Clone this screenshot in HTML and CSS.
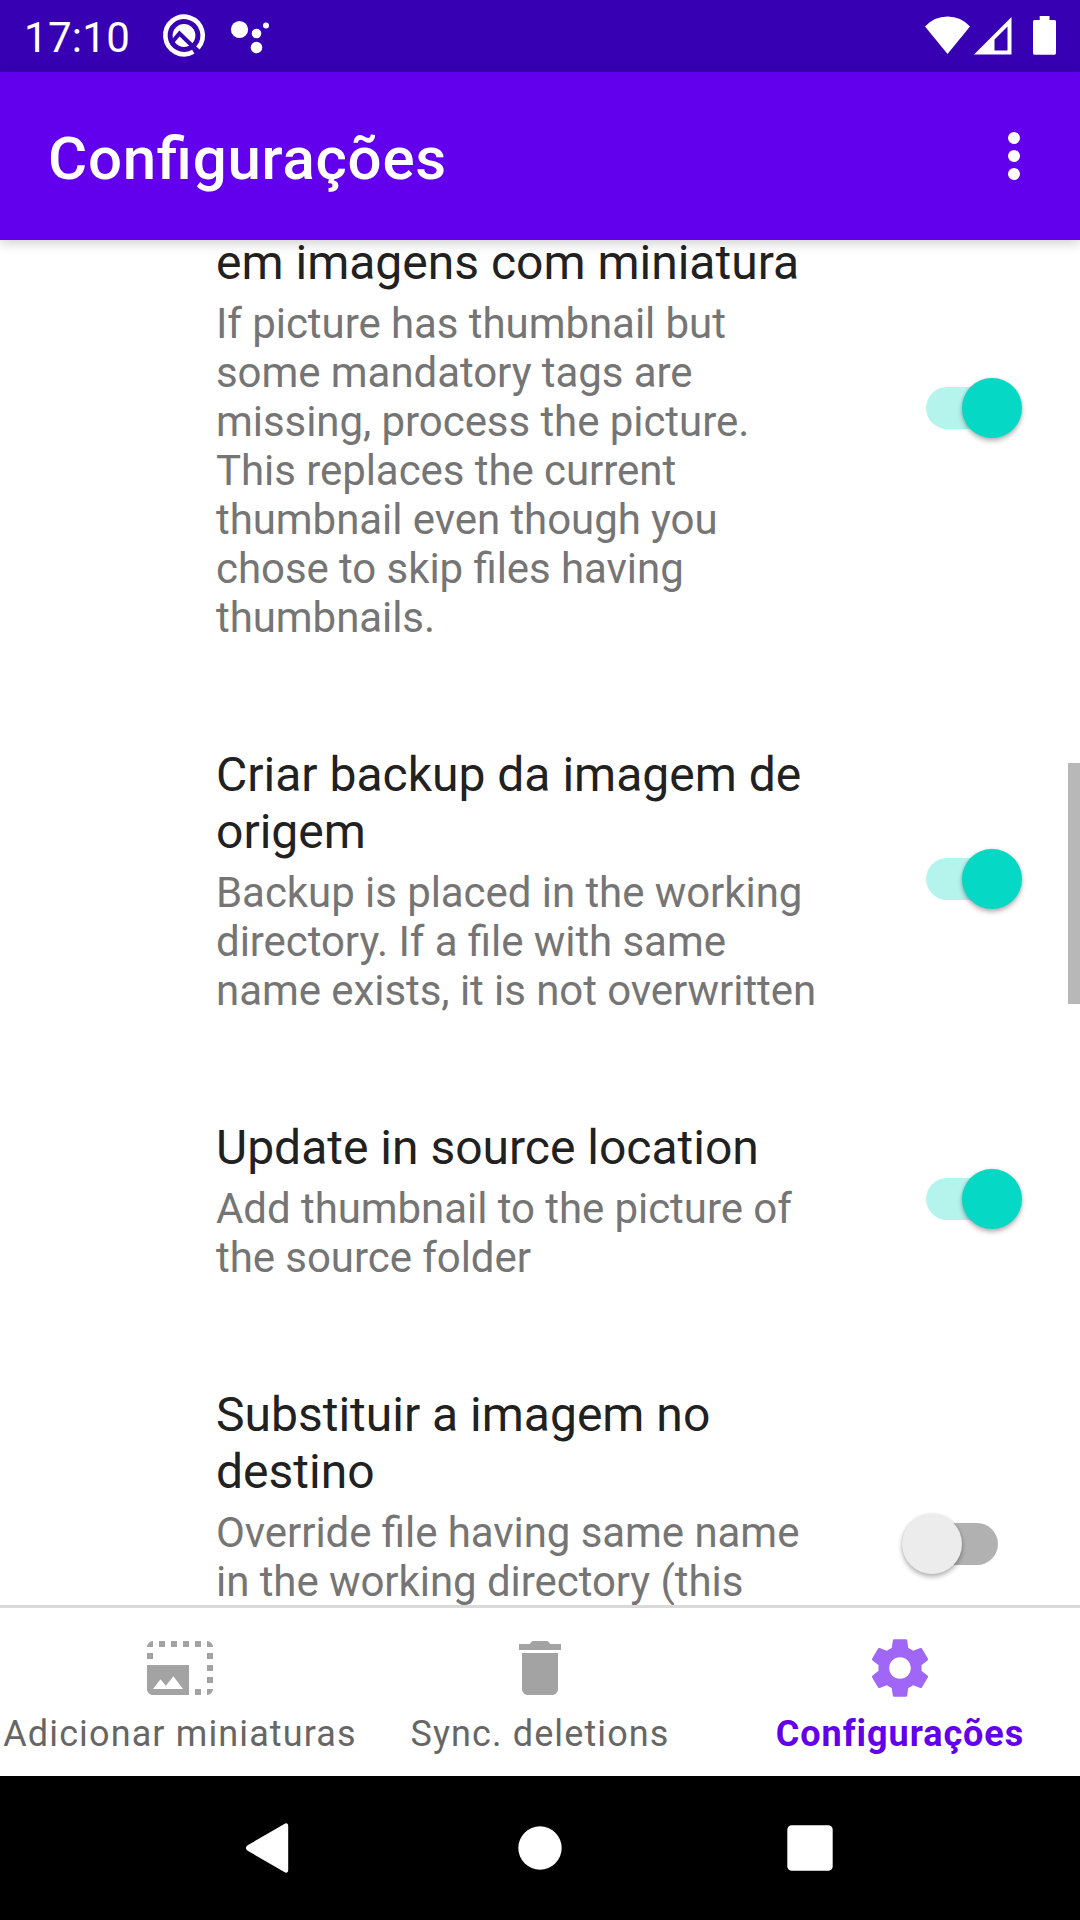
FILE: index.html
```html
<!DOCTYPE html>
<html lang="pt">
<head>
<meta charset="utf-8">
<title>Configurações</title>
<link rel="stylesheet" href="styles.css">
</head>
<body>
<div class="screen">
  <header class="status-bar">
    <span class="clock">17:10</span>
    <svg class="notifications" width="130" height="72" viewBox="150 0 130 72" fill="#fff">
      <path d="M197.900 48A18.700 18.700 0 1 0 193.300 51.700" fill="none" stroke="#fff" stroke-width="4.600"/>
      <circle cx="184" cy="35.500" r="11.400"/>
      <path d="M171 43.500L179.500 33.500L196.500 50" fill="none" stroke="#3700b3" stroke-width="4"/>
      <circle cx="239.500" cy="29.500" r="8.600"/>
      <circle cx="256.500" cy="33.500" r="4.800"/>
      <circle cx="266" cy="25.500" r="3"/>
      <circle cx="256.500" cy="47.500" r="5.800"/>
    </svg>
    <svg class="system-icons" width="160" height="72" viewBox="920 0 160 72" fill="#fff">
      <path d="M947.500 54L925 26.500Q934 16.500 947.500 16.500T970 26.500Z"/>
      <path fill-rule="evenodd" d="M974 54.500L1011.500 17V54.500ZM994.500 50.500H1007.500V26.500L994.500 39.500Z"/>
      <path d="M1039.700 16H1049.500V20H1054.500Q1056 20 1056 21.500V53Q1056 54.700 1054.500 54.700H1034.500Q1033 54.700 1033 53V21.500Q1033 20 1034.500 20H1039.700Z"/>
    </svg>
  </header>

  <div class="app-bar">
    <h1 class="app-title">Configurações</h1>
    <svg class="overflow" width="72" height="72" viewBox="0 0 24 24" fill="#fff">
      <circle cx="12" cy="6" r="2"/><circle cx="12" cy="12" r="2"/><circle cx="12" cy="18" r="2"/>
    </svg>
  </div>

  <main class="list">
    <section class="item item-scrolled">
      <div class="texts">
        <h2 class="title">em imagens com miniatura</h2>
        <p class="summary">If picture has thumbnail but<br>some mandatory tags are<br>missing, process the picture.<br>This replaces the current<br>thumbnail even though you<br>chose to skip files having<br>thumbnails.</p>
      </div>
      <div class="switch on"><span class="thumb"></span></div>
    </section>
    <section class="item">
      <div class="texts">
        <h2 class="title">Criar backup da imagem de<br>origem</h2>
        <p class="summary">Backup is placed in the working<br>directory. If a file with same<br>name exists, it is not overwritten</p>
      </div>
      <div class="switch on"><span class="thumb"></span></div>
    </section>
    <section class="item">
      <div class="texts">
        <h2 class="title">Update in source location</h2>
        <p class="summary">Add thumbnail to the picture of<br>the source folder</p>
      </div>
      <div class="switch on"><span class="thumb"></span></div>
    </section>
    <section class="item item-cut">
      <div class="texts">
        <h2 class="title">Substituir a imagem no<br>destino</h2>
        <p class="summary">Override file having same name<br>in the working directory (this</p>
      </div>
      <div class="switch"><span class="thumb"></span></div>
    </section>
    <div class="scrollbar"></div>
  </main>

  <nav class="tabs">
    <div class="tab">
      <svg class="tab-icon" viewBox="0 0 24 24"><path d="M21 15h2v2h-2v-2zm0-4h2v2h-2v-2zm2 8h-2v2c1 0 2-1 2-2zM13 3h2v2h-2V3zm8 4h2v2h-2V7zm0-4v2h2c0-1-1-2-2-2zM1 7h2v2H1V7zm16-4h2v2h-2V3zm0 16h2v2h-2v-2zM3 3C2 3 1 4 1 5h2V3zm6 0h2v2H9V3zM5 3h2v2H5V3zm-4 8v8c0 1.100.9 2 2 2h12V11H1zm2 8l2.500-3.210 1.790 2.150 2.500-3.220L13 19H3z"/></svg>
      <span class="tab-label">Adicionar miniaturas</span>
    </div>
    <div class="tab">
      <svg class="tab-icon" viewBox="0 0 24 24"><path d="M6 19c0 1.100.9 2 2 2h8c1.100 0 2-.9 2-2V7H6v12zM19 4h-3.500l-1-1h-5l-1 1H5v2h14V4z"/></svg>
      <span class="tab-label">Sync. deletions</span>
    </div>
    <div class="tab active">
      <svg class="tab-icon" viewBox="0 0 24 24"><path d="M19.140 12.940c.04-.3.060-.610.060-.940 0-.320-.020-.640-.070-.940l2.030-1.580c.180-.140.230-.410.120-.610l-1.920-3.320c-.120-.220-.370-.290-.590-.220l-2.390.960c-.5-.380-1.030-.7-1.620-.940l-.360-2.540c-.040-.240-.240-.410-.480-.410h-3.840c-.240 0-.430.170-.470.410l-.360 2.540c-.590.240-1.130.570-1.620.940l-2.390-.960c-.220-.080-.470 0-.590.220L2.740 8.870c-.120.210-.080.470.120.610l2.030 1.580c-.050.3-.090.630-.090.940s.020.640.070.940l-2.030 1.580c-.180.140-.230.410-.120.610l1.920 3.320c.120.220.370.290.590.220l2.390-.960c.5.380 1.030.7 1.620.940l.360 2.540c.050.240.240.410.480.410h3.840c.240 0 .440-.170.470-.410l.360-2.540c.590-.240 1.130-.560 1.620-.940l2.390.960c.220.080.470 0 .590-.220l1.920-3.320c.120-.220.070-.470-.120-.610l-2.010-1.580zM12 15.600c-1.980 0-3.600-1.620-3.600-3.600s1.620-3.600 3.600-3.600 3.600 1.620 3.600 3.600-1.620 3.600-3.600 3.600z"/></svg>
      <span class="tab-label">Configurações</span>
    </div>
  </nav>

  <footer class="system-nav">
    <svg width="60" height="60" viewBox="0 0 60 60" fill="#fff"><path d="M7.200 27.500L43.500 6.500Q48.200 3.500 48.200 8V52Q48.200 56.500 43.500 53.500L7.200 32.500Q4.500 30 7.200 27.500Z"/></svg>
    <svg width="60" height="60" viewBox="0 0 60 60" fill="#fff"><circle cx="30" cy="30" r="21.700"/></svg>
    <svg width="60" height="60" viewBox="0 0 60 60" fill="#fff"><rect x="7.300" y="7.200" width="45.400" height="45.600" rx="4.500"/></svg>
  </footer>
</div>
</body>
</html>
```
FILE: styles.css
```css
* { box-sizing: border-box; margin: 0; padding: 0; }

body {
  width: 1080px;
  height: 1920px;
  overflow: hidden;
  background: #fff;
  font-family: Roboto, sans-serif;
}

svg { display: block; flex: none; }

.screen { display: flex; flex-direction: column; height: 1920px; }

.status-bar {
  display: flex;
  flex: none;
  height: 72px;
  background: #3700b3;
  color: #fff;
}
.clock {
  width: 126px;
  margin-left: 24px;
  font-size: 42px;
  line-height: 76px;
  letter-spacing: 0.3px;
}
.system-icons { margin-left: auto; }

.app-bar {
  position: relative;
  z-index: 1;
  display: flex;
  flex: none;
  align-items: center;
  justify-content: space-between;
  height: 168px;
  padding: 0 30px 0 48px;
  background: #6200ee;
  color: #fff;
  box-shadow: 0 3px 12px rgba(0, 0, 0, 0.2);
}
.app-title {
  padding-top: 5px;
  font-size: 60px;
  font-weight: 500;
  line-height: 70px;
  letter-spacing: 0.75px;
  font-feature-settings: "liga" 1;
}

.list {
  position: relative;
  flex: 1;
  overflow: hidden;
}
.item {
  display: flex;
  align-items: center;
  justify-content: space-between;
  padding: 52px 58px 52px 216px;
}
.item-scrolled { height: 573px; margin-top: -119px; }
.item-scrolled .texts { align-self: flex-end; }
.item-cut { height: 422px; }
.item-cut .texts { align-self: flex-start; }
.title { color: #212121; font-size: 48px; font-weight: 400; line-height: 57px; white-space: nowrap; }
.item-scrolled .title { padding-bottom: 6px; line-height: 45px; }
.summary {
  margin-top: 8px;
  color: #757575;
  font-size: 42px;
  line-height: 49px;
  letter-spacing: -0.06px;
  font-feature-settings: "liga" 1;
  white-space: nowrap;
}

.switch {
  position: relative;
  display: flex;
  align-items: center;
  flex: none;
  width: 120px;
  height: 60px;
  margin-bottom: 3px;
}
.item-scrolled .switch { margin-bottom: 0; }
.switch::before {
  content: "";
  width: 72px;
  height: 42px;
  margin-left: 24px;
  border-radius: 21px;
  background: #b1b1b1;
}
.switch.on::before { background: #b4f4ed; }
.thumb {
  position: absolute;
  left: 0;
  top: 0;
  width: 60px;
  height: 60px;
  border-radius: 50%;
  background: #ececec;
  box-shadow: 0 3px 5px rgba(0, 0, 0, 0.28), 0 0 3px rgba(0, 0, 0, 0.12);
}
.on .thumb { left: 60px; background: #05d9c5; }

.scrollbar {
  position: absolute;
  right: 0;
  top: 523px;
  width: 12px;
  height: 241px;
  background: #b8b8b8;
}

.tabs {
  display: grid;
  grid-template-columns: repeat(3, 360px);
  flex: none;
  height: 171px;
  border-top: 3px solid #d9d9d9;
  background: #fff;
}
.tab {
  display: flex;
  flex-direction: column;
  align-items: center;
  padding-top: 24px;
}
.tab-icon { width: 72px; height: 72px; fill: #a3a3a3; }
.tab-label {
  margin-top: 9px;
  color: #666;
  font-size: 36px;
  line-height: 42px;
  letter-spacing: 1.12px;
  white-space: nowrap;
}
.active .tab-icon { fill: #a066f5; }
.active .tab-label { color: #6200ee; font-weight: 700; letter-spacing: 0.95px; }

.system-nav {
  display: flex;
  flex: none;
  align-items: center;
  justify-content: center;
  gap: 210px;
  height: 144px;
  background: #000;
}
```
